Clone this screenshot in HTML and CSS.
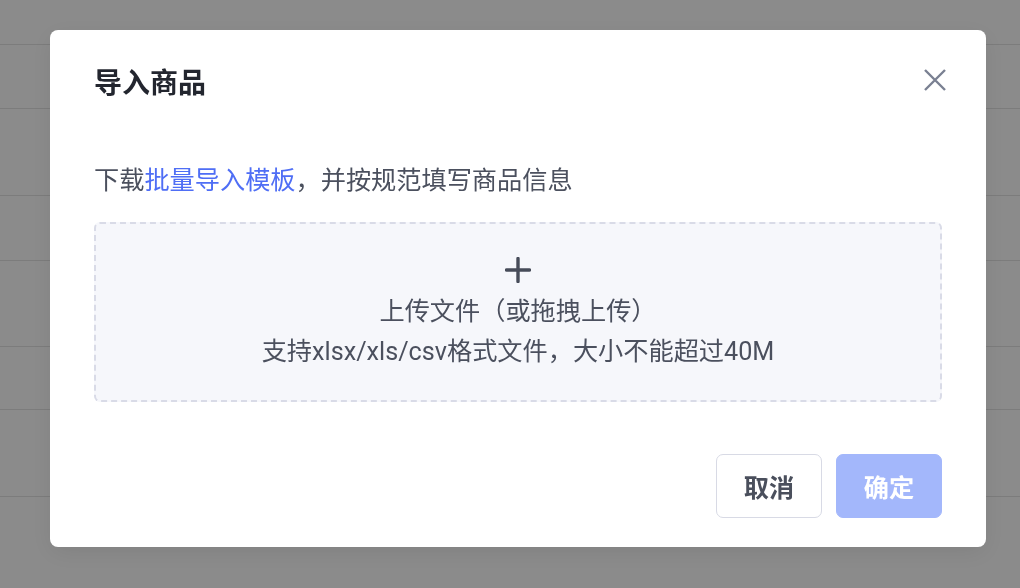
FILE: index.html
```html
<!DOCTYPE html>
<html lang="zh-CN">
<head>
<meta charset="utf-8">
<title>导入商品</title>
<link rel="stylesheet" href="styles.css">
</head>
<body>
<div class="page">
  <div class="row r1"></div>
  <div class="row r2"></div>
  <div class="row r3"></div>
  <div class="row r4"></div>
  <div class="row r5"></div>
  <div class="row r6"></div>
  <div class="row r7"></div>
  <div class="row r8"></div>
</div>
<div class="overlay">
  <div class="dialog">
    <div class="dialog-header">
      <h2 class="dialog-title">导入商品</h2>
      <button class="close-btn" aria-label="关闭">
        <svg width="22" height="22" viewBox="0 0 22 22"><path d="M1 1L21 21M21 1L1 21" stroke="#7a8092" stroke-width="2.4" stroke-linecap="butt" fill="none"/></svg>
      </button>
    </div>
    <p class="hint">下载<a class="link" href="#">批量导入模板</a>，并按规范填写商品信息</p>
    <div class="upload">
      <svg class="plus" width="26" height="26" viewBox="0 0 26 26"><path d="M13 1.5V24.5M1.5 13H24.5" stroke="#474c59" stroke-width="3.4" stroke-linecap="round" fill="none"/></svg>
      <div class="upload-title">上传文件（或拖拽上传）</div>
      <div class="upload-desc">支持xlsx/xls/csv格式文件，大小不能超过40M</div>
    </div>
    <div class="dialog-footer">
      <button class="btn btn-default">取消</button>
      <button class="btn btn-primary">确定</button>
    </div>
  </div>
</div>
</body>
</html>
```

FILE: styles.css
```css
html, body {
  margin: 0;
  padding: 0;
}
body {
  width: 1020px;
  height: 588px;
  overflow: hidden;
  background: #ffffff;
  font-family: Roboto, "Noto Sans CJK SC", sans-serif;
}
.page {
  display: flex;
  flex-direction: column;
}
.row {
  border-bottom: 1px solid #e3e3e3;
  box-sizing: border-box;
}
.r1 { height: 45px; }
.r2 { height: 64px; }
.r3 { height: 87px; }
.r4 { height: 65px; }
.r5 { height: 86px; }
.r6 { height: 63px; }
.r7 { height: 87px; }
.r8 { height: 90px; border-bottom: none; }

.overlay {
  position: fixed;
  inset: 0;
  background: rgba(0, 0, 0, 0.455);
  display: flex;
  justify-content: flex-start;
  align-items: flex-start;
  padding: 30px 0 0 50px;
}
.dialog {
  width: 936px;
  height: 517px;
  box-sizing: border-box;
  background: #ffffff;
  border-radius: 8px;
  padding: 34px 44px 29px;
  display: flex;
  flex-direction: column;
  box-shadow: 0 6px 24px rgba(0, 0, 0, 0.08);
}
.dialog-header {
  display: flex;
  align-items: center;
  justify-content: space-between;
  height: 40px;
}
.dialog-title {
  margin: 0;
  font-size: 28px;
  font-weight: 600;
  line-height: 40px;
  color: #23262f;
}
.close-btn {
  border: none;
  background: none;
  padding: 0;
  width: 22px;
  height: 22px;
  margin-right: -4px;
  margin-top: -8px;
  display: flex;
}
.hint {
  margin: 59px 0 0;
  font-size: 25.2px;
  line-height: 36px;
  color: #4b505e;
}
.link {
  color: #4f6ef5;
  text-decoration: none;
}
.upload {
  margin-top: 23px;
  height: 180px;
  box-sizing: border-box;
  border: 2px dashed #d9dbe7;
  border-radius: 6px;
  background: #f6f7fb;
  display: flex;
  flex-direction: column;
  align-items: center;
  padding-top: 33px;
}
.plus {
  display: block;
}
.upload-title,
.upload-desc {
  font-size: 25.2px;
  line-height: 40px;
  color: #4b505e;
}
.upload-title {
  margin-top: 9px;
}
.dialog-footer {
  margin-top: auto;
  display: flex;
  justify-content: flex-end;
  gap: 14px;
}
.btn {
  width: 106px;
  height: 64px;
  box-sizing: border-box;
  border-radius: 7px;
  font-family: Roboto, "Noto Sans CJK SC", sans-serif;
  font-size: 25.2px;
  font-weight: 600;
  padding: 0;
}
.btn-default {
  background: #ffffff;
  border: 1px solid #d8dae5;
  color: #4a4f5c;
}
.btn-primary {
  background: #a3b7fb;
  border: 1px solid #a3b7fb;
  color: #ffffff;
}
```
